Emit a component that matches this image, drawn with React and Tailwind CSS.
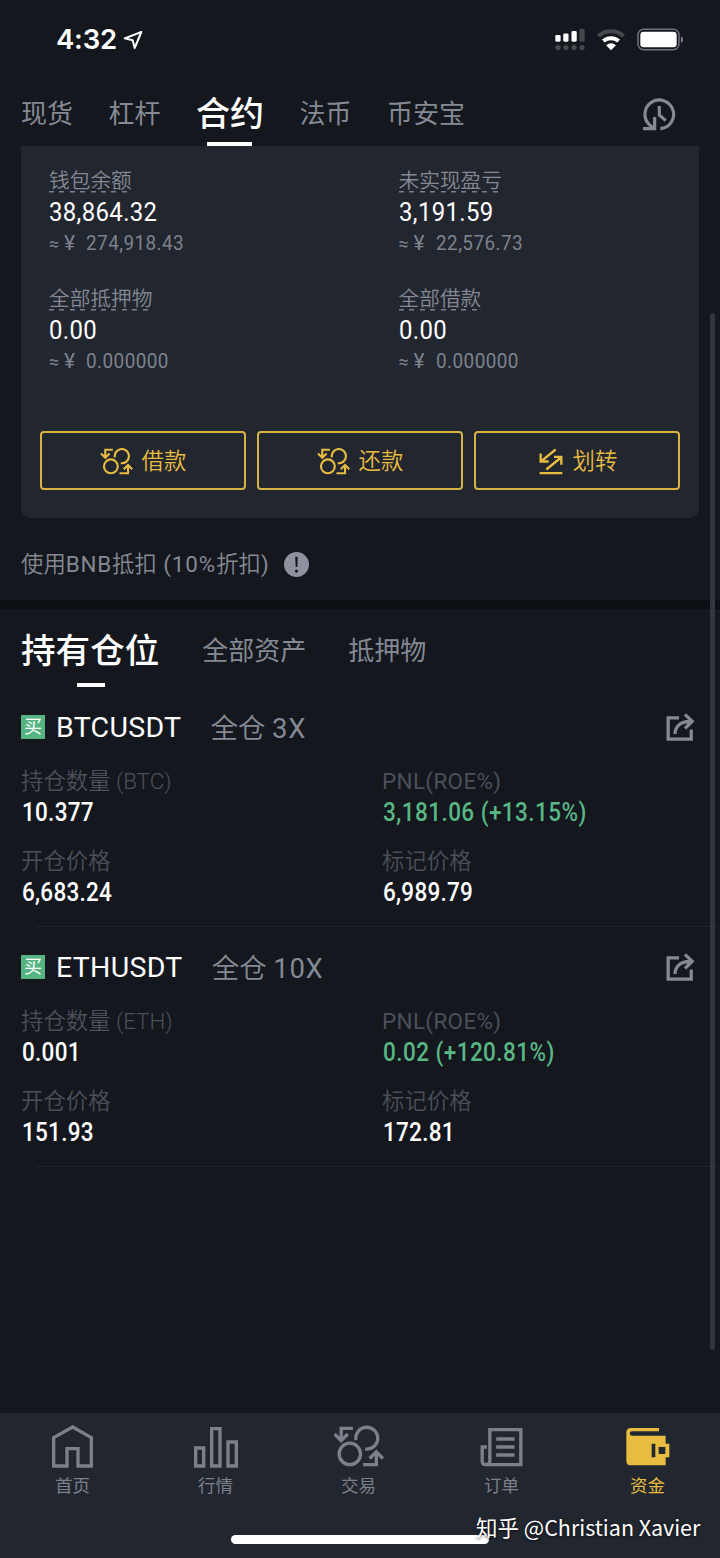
import React from 'react';

const topTabs = ['现货', '杠杆', '合约', '法币', '币安宝'];

const balances = [
  { label: '钱包余额', value: '38,864.32', approx: '274,918.43' },
  { label: '未实现盈亏', value: '3,191.59', approx: '22,576.73' },
  { label: '全部抵押物', value: '0.00', approx: '0.000000' },
  { label: '全部借款', value: '0.00', approx: '0.000000' },
];

const positions = [
  {
    symbol: 'BTCUSDT',
    coin: 'BTC',
    leverage: '3X',
    size: '10.377',
    pnl: '3,181.06 (+13.15%)',
    entry: '6,683.24',
    mark: '6,989.79',
  },
  {
    symbol: 'ETHUSDT',
    coin: 'ETH',
    leverage: '10X',
    size: '0.001',
    pnl: '0.02 (+120.81%)',
    entry: '151.93',
    mark: '172.81',
  },
];

function SwapIcon({ className }) {
  return (
    <svg viewBox="242 111 100 81" className={className} fill="none" stroke="currentColor" strokeWidth="6.500">
      <circle cx="275" cy="166" r="21" />
      <path d="M287 139A21.500 21.500 0 1 1 305 156.500" />
      <path d="M281 116H258V139M245 127L258 140L271 127" />
      <path d="M301 187H327V164M314 175L327 162L340 175" />
    </svg>
  );
}

function TransferIcon({ className }) {
  return (
    <svg viewBox="476 112 72 80" className={className} fill="none" stroke="currentColor" strokeWidth="7">
      <path d="M526 116L483 151M481 128V152H505" />
      <path d="M498 176L542 140M521 138H543V162M478 187H546" />
    </svg>
  );
}

function HistoryIcon() {
  return (
    <svg viewBox="849 294 102 99" className="h-[33px] w-[34px] text-[#848993]" fill="none" stroke="currentColor" strokeWidth="9.500">
      <path d="M901 386A43 43 0 1 0 868 374L880 384" />
      <path d="M849 386H884V351M898 318V345L917 362" />
    </svg>
  );
}

function ShareIcon() {
  return (
    <svg viewBox="917 294 87 85" className="h-[28px] w-[29px] text-[#848993]" fill="none" stroke="currentColor" strokeWidth="10">
      <path d="M956 309H923V373H993V344" />
      <path d="M944 358C944 333 963 319 994 319M974 298L996 319L974 341" />
    </svg>
  );
}

function HomeIcon() {
  return (
    <svg viewBox="153 74 123 129" className="h-[43px] w-[41px]" fill="none" stroke="currentColor" strokeWidth="10">
      <path d="M158 112L215 80L271 112V197H231V145H198V197H158Z" />
    </svg>
  );
}

function MarketIcon() {
  return (
    <svg viewBox="582 74 132 129" className="h-[43px] w-[44px]" fill="none" stroke="currentColor" strokeWidth="10">
      <path d="M587 143H611V197H587ZM635 85H660V197H635ZM684 125H709V197H684Z" />
    </svg>
  );
}

function TradeIcon() {
  return <SwapIcon className="h-[43px] w-[51px]" />;
}

function OrderIcon() {
  return (
    <svg viewBox="362 74 128 129" className="h-[43px] w-[43px]" fill="none" stroke="currentColor" strokeWidth="10">
      <path d="M391 181V88H484V193H378Q391 193 391 181M382 140H368V183Q368 193 379 193" />
      <path d="M410 116H465M410 140H465M410 164H465" />
    </svg>
  );
}

function WalletIcon() {
  return (
    <svg viewBox="800 74 132 129" className="h-[43px] w-[44px]" fill="currentColor">
      <path
        fillRule="evenodd"
        d="M815 83H899V93H818Q811 93 811 99.500T818 106H919V130H930V171H919V195H815Q801 195 801 181V97Q801 83 815 83ZM877 130V171H888V130ZM898 140V161H918V140Z"
      />
    </svg>
  );
}

const navItems = [
  { label: '首页', Icon: HomeIcon },
  { label: '行情', Icon: MarketIcon },
  { label: '交易', Icon: TradeIcon },
  { label: '订单', Icon: OrderIcon },
  { label: '资金', Icon: WalletIcon, active: true },
];

function StatusBar() {
  return (
    <div className="flex h-[79px] items-center pl-[56px] pr-[37px]">
      <span className="font-['Inter',sans-serif] text-[27.500px] font-semibold leading-none tracking-[-0.2px]">4:32</span>
      <svg viewBox="369 88 60 60" className="ml-[6px] h-[20px] w-[20px]" fill="none" stroke="#fff" strokeWidth="6" strokeLinejoin="round">
        <path d="M424 94L374 113L398 119L404 142Z" />
      </svg>
      <div className="ml-auto flex items-center">
        <svg viewBox="585 81 91 69" className="h-[23px] w-[30px]" fill="#fff">
          <rect x="586" y="102" width="16" height="20" rx="4" />
          <rect x="610" y="97" width="16" height="25" rx="4" />
          <rect x="635" y="90" width="16" height="32" rx="4" />
          <g fill="#45484d">
            <rect x="659" y="83" width="16" height="39" rx="4" />
            <circle cx="594" cy="140" r="8" />
            <circle cx="618" cy="140" r="8" />
            <circle cx="643" cy="140" r="8" />
            <circle cx="667" cy="140" r="8" />
          </g>
        </svg>
        <svg viewBox="710 82 84 69" className="ml-[12px] h-[23px] w-[28px]" fill="none" stroke="#fff">
          <path d="M714 106A57 57 0 0 1 790 106" stroke="#45484d" strokeWidth="12" />
          <path d="M729 121A35 35 0 0 1 775 121" strokeWidth="12" />
          <path d="M752 149L737 134Q752 121 767 134Z" fill="#fff" stroke="none" />
        </svg>
        <svg viewBox="828 83 138 69" className="ml-[12px] h-[23px] w-[46px]">
          <rect x="831" y="87" width="123" height="61" rx="17" fill="none" stroke="#6f7277" strokeWidth="4.500" />
          <rect x="838" y="94" width="109" height="47" rx="10" fill="#fff" />
          <path d="M960 108Q966 112 966 118T960 128Z" fill="#85888c" />
        </svg>
      </div>
    </div>
  );
}

function Balance({ label, value, approx }) {
  return (
    <div className="h-[118px]">
      <div className="w-fit bg-[repeating-linear-gradient(to_right,#7b808b_0_5px,transparent_5px_10.4px)] bg-[length:100%_1.5px] bg-[position:0_25px] bg-no-repeat text-[20.7px] font-[350] leading-[30px] text-[#848993]">
        {label}
      </div>
      <div className="w-fit origin-left scale-x-[0.92] text-[26px] leading-[32px] tracking-[0.4px] text-white">{value}</div>
      <div className="flex text-[21px] leading-[31px] text-[#7d828d]">
        <span className="w-[15px] text-[18px]">≈</span>
        <span className="w-[22px]">¥</span>
        <span className="origin-left scale-x-[0.9] tracking-[0.5px]">{approx}</span>
      </div>
    </div>
  );
}

function ActionButton({ icon, label }) {
  return (
    <button className="flex h-[59px] flex-1 items-center justify-center gap-[9px] rounded-[4px] border-2 border-[#d9b244] pt-[2px] text-[22.4px] font-[350] text-[#e8bc41]">
      {icon}
      <span>{label}</span>
    </button>
  );
}

function Field({ label, value, green }) {
  return (
    <div className="h-[80px]">
      <div className={green ? 'text-[22.4px] leading-[31px] tracking-[0.4px] text-[#4b4f59]' : 'text-[22.4px] font-[350] leading-[31px] text-[#4b4f59]'}>
        {label}
      </div>
      <div
        className={
          green
            ? 'ml-[1px] w-fit origin-left scale-x-[0.9] text-[25px] font-medium leading-[32px] tracking-[0.5px] text-[#58b785]'
            : 'ml-[1px] w-fit origin-left scale-x-[0.9] text-[25px] font-medium leading-[32px] tracking-[0.3px] text-white'
        }
      >
        {value}
      </div>
    </div>
  );
}

function Position({ item }) {
  return (
    <div className="h-[240px] pl-[21px]">
      <div className="flex h-[40px] items-center pr-[25px]">
        <span className="mb-[2px] flex h-[24px] w-[24px] items-center justify-center bg-[#56b481] text-[18px] leading-none text-white">买</span>
        <span className="ml-[11px] text-[28.500px] leading-none tracking-[0.3px] text-white">{item.symbol}</span>
        <span className="ml-[29px] pt-[1px] text-[27.500px] font-[350] leading-none text-[#848993]">
          全仓 <span className="font-normal tracking-[0.6px]">{item.leverage}</span>
        </span>
        <span className="mb-[2px] ml-auto">
          <ShareIcon />
        </span>
      </div>
      <div className="mt-[18px] grid grid-cols-[361px_1fr]">
        <Field label={`持仓数量 (${item.coin})`} value={item.size} />
        <Field label="PNL(ROE%)" value={item.pnl} green />
        <Field label="开仓价格" value={item.entry} />
        <Field label="标记价格" value={item.mark} />
      </div>
      <div className="ml-[15px] h-px bg-[#20242c]" />
    </div>
  );
}

function App() {
  return (
    <div className="relative flex h-[1558px] w-[720px] flex-col overflow-hidden bg-[#14171e] font-['Roboto','Noto_Sans_CJK_SC',sans-serif] text-white">
      <StatusBar />

      <div className="flex h-[67px] items-center gap-[35.500px] pl-[21px] pr-[43px] pt-[1px] text-[26px] leading-none text-[#848993]">
        {topTabs.map((tab) =>
          tab === '合约' ? (
            <span key={tab} className="relative z-10 flex h-[66px] items-center pt-[2px] text-[34px] font-medium text-white">
              {tab}
              <i className="absolute bottom-0 left-[11px] h-[4px] w-[45px] bg-white" />
            </span>
          ) : (
            <span key={tab} className="pt-[2px]">{tab}</span>
          )
        )}
        <span className="ml-auto pt-[2px]">
          <HistoryIcon />
        </span>
      </div>

      <div className="mx-[21px] h-[372px] rounded-b-[9px] bg-[#22262f] px-[19px] pt-[20px]">
        <div className="grid grid-cols-[349.500px_1fr] pl-[9px]">
          {balances.map((b) => (
            <Balance key={b.label} {...b} />
          ))}
        </div>
        <div className="mt-[29px] flex gap-[11px]">
          <ActionButton icon={<SwapIcon className="h-[27px] w-[33px]" />} label="借款" />
          <ActionButton icon={<SwapIcon className="h-[27px] w-[33px]" />} label="还款" />
          <ActionButton icon={<TransferIcon className="ml-[2px] mr-[1px] h-[27px] w-[24px]" />} label="划转" />
        </div>
      </div>

      <div className="flex h-[82px] items-center pl-[21px] pt-[10px] text-[22.4px] font-[350] text-[#848993]">
        <span className="pt-[2px]">
          使用<span className="font-normal tracking-[0.8px]">BNB</span>抵扣
          <span className="font-normal tracking-[0.9px]"> (10%</span>折扣<span className="font-normal">)</span>
        </span>
        <svg viewBox="0 0 24 24" className="ml-[15px] h-[25px] w-[25px]">
          <circle cx="12" cy="12" r="12" fill="#8d929e" />
          <path d="M10.800 4.500H13.200L12.800 14.500H11.200Z" fill="#14171e" />
          <circle cx="12" cy="18.300" r="1.500" fill="#14171e" />
        </svg>
      </div>
      <div className="h-[10px] bg-[#0c0f13]" />

      <div className="flex h-[98px] border-t border-[#1b1e26] pl-[21px] text-[26px] leading-[80px] text-[#848993]">
        <span className="relative h-[80px] text-[34.600px] font-medium leading-[80px] text-white">
          持有仓位
          <i className="absolute left-[56px] top-[72px] h-[4px] w-[28px] bg-white" />
        </span>
        <span className="ml-[43px]">全部资产</span>
        <span className="ml-[42px]">抵押物</span>
      </div>

      {positions.map((p) => (
        <Position key={p.symbol} item={p} />
      ))}

      <nav className="mt-auto flex h-[145px] bg-[#22262f] pl-[1px] pr-[1px] pt-[12px]">
        {navItems.map(({ label, Icon, active }) => (
          <div key={label} className={active ? 'flex flex-1 flex-col items-center pl-[3px] text-[#e8bc41]' : 'flex flex-1 flex-col items-center text-[#7b808a]'}>
            <div className="h-[44px]">
              <Icon />
            </div>
            <span className="text-[17.500px] leading-[34px]">{label}</span>
          </div>
        ))}
      </nav>

      <div className="absolute left-[231px] top-[1535px] h-[9px] w-[258px] rounded-full bg-white" />
      <div className="absolute left-[476px] top-[1509px] whitespace-nowrap font-['Noto_Sans_CJK_SC',sans-serif] text-[21.500px] leading-[36px] text-white [text-shadow:0_1px_3px_rgba(0,0,0,0.7)]">
        知乎 @Christian Xavier
      </div>
      <div className="absolute left-[710px] top-[313px] h-[1037px] w-[5px] rounded-full bg-[#31353e]" />
    </div>
  );
}

export default App;
